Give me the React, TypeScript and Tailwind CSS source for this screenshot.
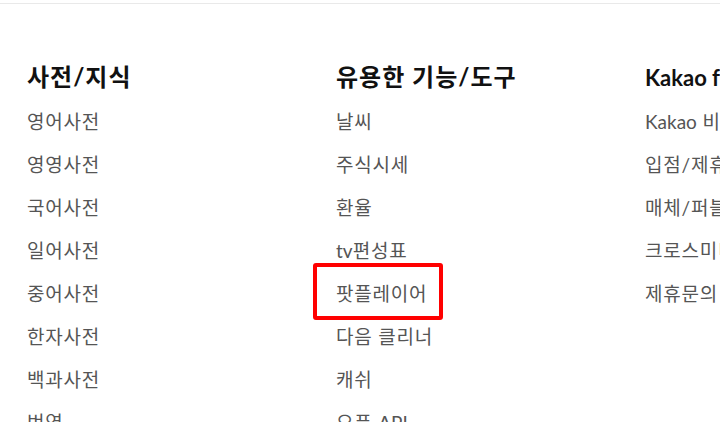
const columns = [
  {
    title: '사전/지식',
    items: ['영어사전', '영영사전', '국어사전', '일어사전', '중어사전', '한자사전', '백과사전', '번역'],
  },
  {
    title: '유용한 기능/도구',
    items: ['날씨', '주식시세', '환율', 'tv편성표', '팟플레이어', '다음 클리너', '캐쉬', '오픈 API'],
  },
  {
    title: 'Kakao for Business',
    items: ['Kakao 비즈니스', '입점/제휴문의', '매체/퍼블리셔', '크로스미디어', '제휴문의'],
  },
];

// highlighted link in the reference
const marked = '팟플레이어';

// latin runs sit a bit tighter than the hangul around them
const Label = ({ text, latin }: { text: string; latin: string }) => (
  <>
    {text.split(/([A-Za-z]+(?: [A-Za-z]+)*)/).map((part, i) =>
      /[A-Za-z]/.test(part) ? (
        <span key={i} className={latin}>
          {part}
        </span>
      ) : (
        part
      ),
    )}
  </>
);

export default function App() {
  return (
    <div
      className="h-[422px] w-[720px] overflow-hidden bg-white pt-[3px]"
      style={{ fontFamily: 'Lato, "Noto Sans CJK KR", sans-serif' }}
    >
      <div className="h-full border-t border-[#e9e9e9]">
        <div className="grid grid-cols-[309px_309px_309px] pl-[27px] pt-[52px]">
          {columns.map((col) => (
            <div key={col.title} className="flex flex-col whitespace-nowrap">
              <h3 className="mb-[2px] h-[42px] text-[24px] font-bold leading-[42px] tracking-[1px] text-[#111]">
                <Label text={col.title} latin="text-[22px] tracking-normal" />
              </h3>
              <ul className="flex flex-col">
                {col.items.map((item) => (
                  <li key={item} className="relative h-[43px] text-[19px] leading-[43px] tracking-[0.8px] text-[#555]">
                    <a href="#">
                      <Label text={item} latin="tracking-normal" />
                    </a>
                    {item === marked && (
                      <div className="absolute -left-[23px] top-[-9px] h-[57px] w-[130px] rounded-[3px] border-4 border-[#ff0000]" />
                    )}
                  </li>
                ))}
              </ul>
            </div>
          ))}
        </div>
      </div>
    </div>
  );
}
